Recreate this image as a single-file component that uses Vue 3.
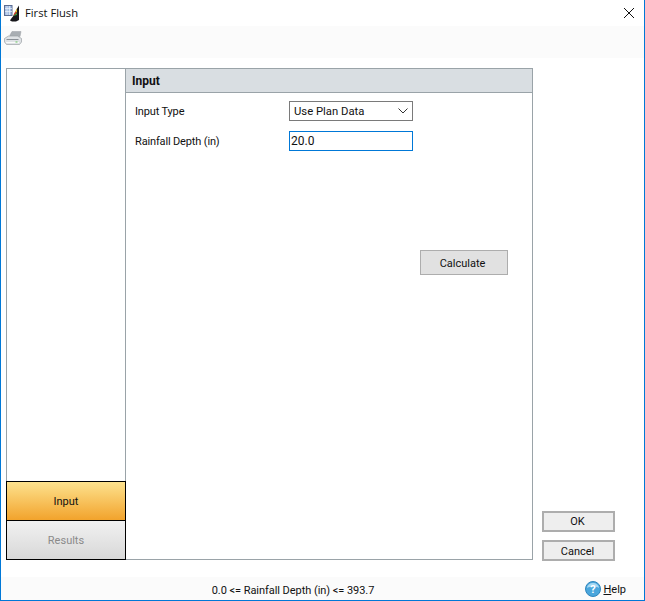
<script setup>
const tabs = [
  { label: 'Input', active: true },
  { label: 'Results', active: false }
]
</script>

<template>
  <div class="window">
    <header class="titlebar">
      <svg class="appicon" viewBox="0 0 17 17" width="17" height="17">
        <rect x="0.5" y="0.5" width="7.5" height="10" fill="#a4bce2" stroke="#5d6d92" />
        <path d="M3 1v9M5.5 1v9M1 3.5h7M1 6.5h7" stroke="#eef3fb" stroke-width="0.7" />
        <path d="M6 15.5c1-2 2-3 3-4 2-3 3-7 6-11v14.500l-3 1.500H8z" fill="#16161a" />
        <path d="M9 11l2-4 2 1z" fill="#d8362a" />
        <path d="M11 7l2-3.500v4z" fill="#e9b422" />
        <path d="M9 11l4-3v2z" fill="#37a33c" />
      </svg>
      <span class="title">First Flush</span>
      <svg class="close" viewBox="0 0 10 10" width="10" height="10">
        <path d="M0 0l10 10M10 0L0 10" stroke="#111" stroke-width="1" fill="none" />
      </svg>
    </header>

    <div class="toolbar">
      <svg viewBox="0 0 18 14" width="18" height="14">
        <path d="M6 4L8 0.500h9l-1 5H6z" fill="#a9aeb3" stroke="#9a9fa4" stroke-width="0.5" />
        <path d="M0.500 7.500l4-2.500h9l4 2.500v3.500l-2 2.500h-13l-2-2.500z" fill="#dfe2e5" stroke="#9ba0a5" stroke-width="0.7" />
        <path d="M2.500 8.500h12" stroke="#8a9096" stroke-width="1" />
        <path d="M2 11.500h13" stroke="#fafafa" stroke-width="1" />
        <rect x="11.500" y="10.500" width="2" height="1" fill="#63c15d" />
      </svg>
    </div>

    <main class="body">
      <div class="panel">
        <aside class="sidebar">
          <div class="nav-space"></div>
          <div
            v-for="tab in tabs"
            :key="tab.label"
            class="tab"
            :class="{ active: tab.active }"
          >{{ tab.label }}</div>
        </aside>

        <section class="content">
          <h2 class="heading">Input</h2>
          <div class="form">
            <div class="row">
              <label>Input Type</label>
              <div class="select">
                <span>Use Plan Data</span>
                <svg viewBox="0 0 10 6" width="10" height="6">
                  <path d="M0.500 0.500L5 5l4.500-4.500" stroke="#333" fill="none" />
                </svg>
              </div>
            </div>
            <div class="row second">
              <label>Rainfall Depth (in)</label>
              <div class="input">20.0</div>
            </div>
            <div class="calc-row">
              <button class="calc">Calculate</button>
            </div>
          </div>
        </section>
      </div>

      <div class="actions">
        <button class="btn">OK</button>
        <button class="btn">Cancel</button>
      </div>
    </main>

    <footer class="footer">
      <span class="status">0.0 &lt;= Rainfall Depth (in) &lt;= 393.7</span>
      <span class="help">
        <svg viewBox="0 0 16 16" width="16" height="16">
          <circle cx="8" cy="8" r="7.500" fill="#4aa6dc" stroke="#2f86bd" />
          <path d="M2 7a6 5 0 0 1 12 0c-3-2-8-2-12 0z" fill="#a6d8f3" />
          <text x="8" y="12" class="q">?</text>
        </svg>
        <span><u>H</u>elp</span>
      </span>
    </footer>
  </div>
</template>

<style scoped>
.window {
  box-sizing: border-box;
  width: 645px;
  height: 601px;
  display: flex;
  flex-direction: column;
  background: #fff;
  border: 1px solid #0078d7;
  border-top: none;
  font-family: Roboto, "Liberation Sans", sans-serif;
  font-size: 11px;
  color: #111;
  overflow: hidden;
}
.titlebar {
  height: 26px;
  display: flex;
  align-items: center;
  padding: 0 10px 0 3px;
  flex: none;
}
.appicon { flex: none; }
.title {
  margin-left: 4px;
  margin-bottom: 2px;
  flex: 1;
  color: #111;
  font-family: "Open Sans", sans-serif;
  font-size: 11.2px;
}
.close { flex: none; }
.toolbar {
  height: 32px;
  flex: none;
  background: #fbfbfb;
  padding: 5px 0 0 3px;
  box-sizing: border-box;
}
.toolbar svg { display: block; }
.body {
  flex: 1;
  display: flex;
  padding: 10px 29px 17px 5px;
  gap: 9px;
  min-height: 0;
}
.panel {
  width: 527px;
  display: flex;
  border: 1px solid #9aa3a8;
  box-sizing: border-box;
}
.sidebar {
  width: 119px;
  flex: none;
  display: flex;
  flex-direction: column;
  box-sizing: border-box;
  border-right: 1px solid #9aa3a8;
}
.nav-space { flex: 1; }
.tab {
  height: 40px;
  margin: -1px -1px 0 -1px;
  box-sizing: border-box;
  border: 1px solid #000;
  display: flex;
  align-items: center;
  justify-content: center;
  color: #8a8a8a;
  background: linear-gradient(#f1f1f1, #d8d8d8);
}
.tab:last-child { margin-bottom: -1px; }
.tab.active {
  color: #111;
  background: linear-gradient(#fde28e, #f2a32c);
}
.content {
  flex: 1;
  display: flex;
  flex-direction: column;
}
.heading {
  margin: 0;
  height: 24px;
  line-height: 24px;
  padding-left: 6px;
  box-sizing: border-box;
  background: #d9dee2;
  border-bottom: 1px solid #9aa3a8;
  font-size: 12px;
  font-weight: 700;
}
.form {
  flex: 1;
  padding: 8px 24px 0 9px;
  display: flex;
  flex-direction: column;
}
.row {
  display: flex;
  align-items: center;
  height: 20px;
}
.row.second { margin-top: 10px; }
.row label { width: 154px; flex: none; letter-spacing: -0.15px; }
.select, .input {
  box-sizing: border-box;
  width: 124px;
  height: 20px;
  display: flex;
  align-items: center;
  justify-content: space-between;
  font-size: 11.3px;
}
.select {
  border: 1px solid #7a7a7a;
  padding: 0 4px;
}
.input {
  border: 1px solid #0078d7;
  padding: 0 1px;
  font-size: 12px;
}
.calc-row {
  display: flex;
  justify-content: flex-end;
  margin-top: 99px;
}
.calc {
  width: 88px;
  height: 25px;
  border: 1px solid #adadad;
  background: #e1e1e1;
  font: inherit;
  color: #111;
  padding: 1px 3px 0 0;
}
.actions {
  flex: 1;
  display: flex;
  flex-direction: column;
  justify-content: flex-end;
  gap: 8px;
  margin-bottom: -1px;
}
.btn {
  width: 73px;
  height: 21px;
  border: 2px solid #adadad;
  background: #eee;
  font: inherit;
  color: #111;
  padding: 1px 2px 0 0;
}
.btn:first-child { padding-top: 0; }
.footer {
  height: 23px;
  flex: none;
  background: #fbfbfb;
  position: relative;
  display: flex;
  align-items: center;
  justify-content: center;
  box-sizing: border-box;
}
.status { margin-right: 59px; margin-top: 3px; letter-spacing: -0.05px; }
.help {
  position: absolute;
  right: 18px;
  top: 4px;
  display: flex;
  align-items: center;
  gap: 2px;
}
.q {
  font-size: 11px;
  font-weight: 700;
  fill: #fff;
  text-anchor: middle;
}
</style>
